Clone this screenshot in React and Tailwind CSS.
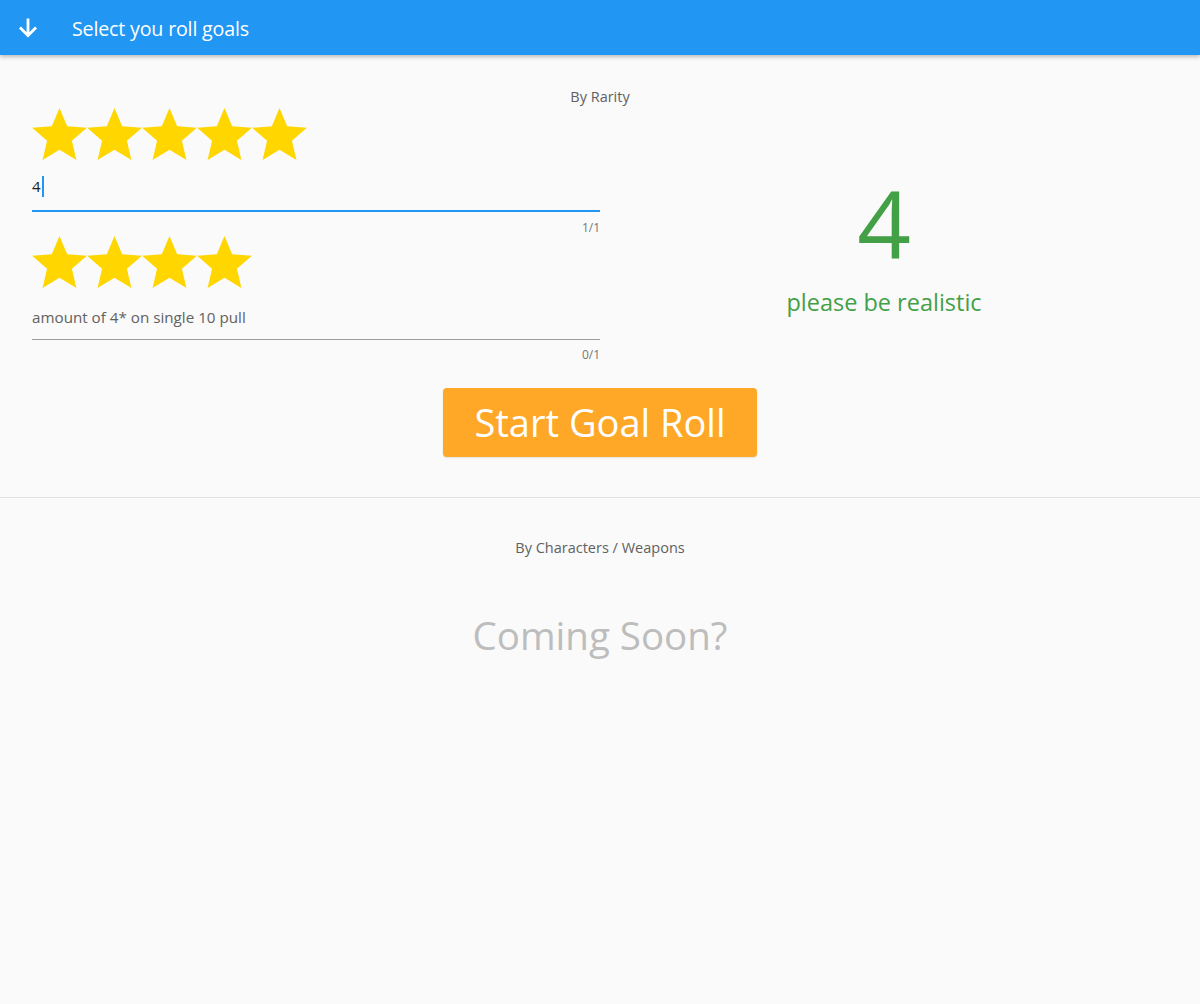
import React from 'react'

const Star = () => (
  <svg viewBox="2 2 20 19" className="w-[55px] h-[52px] shrink-0" fill="#FFD600">
    <path d="M12 17.27L18.18 21l-1.64-7.03L22 9.24l-7.19-.61L12 2 9.19 8.63 2 9.24l5.46 4.73L5.82 21z" />
  </svg>
)

const Stars = ({ count }) => (
  <div className="flex">
    {Array.from({ length: count }).map((_, i) => (
      <Star key={i} />
    ))}
  </div>
)

export default function App() {
  return (
    <div className="min-h-[1004px] bg-[#fafafa] font-['Open_Sans',sans-serif]">
      {/* App bar */}
      <header className="h-[55px] bg-[#2196F3] flex items-center shadow-[0_2px_4px_rgba(0,0,0,0.25)] relative z-10">
        <svg viewBox="0 0 24 24" className="w-[26px] h-[26px] ml-[15px] mt-[1px]" fill="none" stroke="white" strokeWidth="2.6" strokeLinecap="square">
          <path d="M12 4.5v14M5.5 12.5l6.5 6.5 6.5-6.5" />
        </svg>
        <h1 className="ml-[31px] mt-[3px] text-white text-[19.7px] tracking-[-0.2px]">Select you roll goals</h1>
      </header>

      {/* By Rarity */}
      <section className="pt-[33px]">
        <p className="text-center text-[14.5px] text-[#616161] leading-[18px]">By Rarity</p>
        <div className="flex px-[32px]">
          <div className="w-[568px]">
            <div className="mt-[2px]">
              <Stars count={5} />
            </div>
            <div className="mt-[16px] border-b-2 border-[#2196F3] h-[36px] flex items-start">
              <span className="text-[15px] text-[#212121] leading-[20px]">4</span>
              <span className="w-[2px] h-[21px] bg-[#2196F3] ml-[1px]" />
            </div>
            <p className="text-right text-[12px] text-[#757575] leading-[14px] mt-[9px]">1/1</p>
            <div className="mt-[1px]">
              <Stars count={4} />
            </div>
            <div className="mt-[17px] border-b border-[#9e9e9e] h-[35px]">
              <span className="text-[15.2px] text-[#616161] leading-[20px]">amount of 4* on single 10 pull</span>
            </div>
            <p className="text-right text-[12px] text-[#757575] leading-[14px] mt-[8px]">0/1</p>
          </div>
          <div className="w-[568px] flex flex-col items-center pt-[65px]">
            <span className="text-[#43A047] text-[94px] leading-[104px]">4</span>
            <span className="text-[#43A047] text-[23.5px] leading-[30px] mt-[12px]">please be realistic</span>
          </div>
        </div>
        <div className="flex justify-center mt-[26px]">
          <button className="w-[314px] h-[69px] bg-[#FFA726] rounded-[4px] text-white text-[38px] shadow-[0_1px_2px_rgba(0,0,0,0.1)]">
            Start Goal Roll
          </button>
        </div>
      </section>

      <div className="mt-[40px] border-t border-[#e0e0e0]" />

      {/* By Characters / Weapons */}
      <section className="pt-[41px]">
        <p className="text-center text-[14.5px] text-[#616161] leading-[18px]">By Characters / Weapons</p>
        <p className="text-center text-[38.5px] text-[#bdbdbd] mt-[53px] leading-[50px]">Coming Soon?</p>
      </section>
    </div>
  )
}
